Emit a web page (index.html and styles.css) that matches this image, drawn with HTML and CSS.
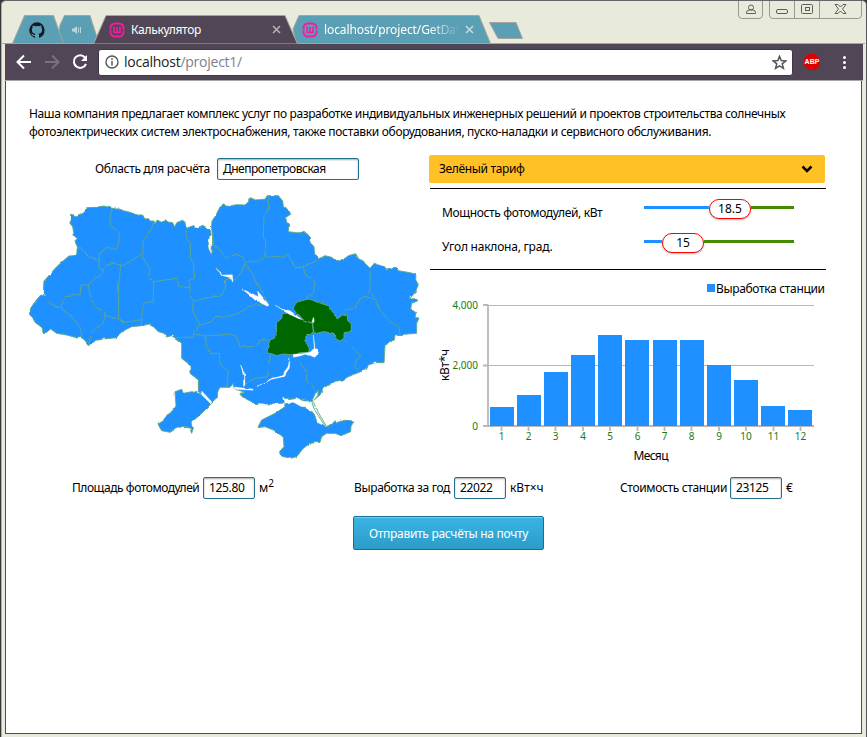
FILE: index.html
```html
<!DOCTYPE html>
<html lang="ru">
<head>
<meta charset="utf-8">
<title>Калькулятор</title>
<link rel="stylesheet" href="styles.css">
</head>
<body>
<div class="window">
  <header class="tabstrip">
    <svg class="tabshapes" width="867" height="44" viewBox="0 0 867 44" stroke="#a6a69e">
      <path d="M2 43.5H865" fill="none"/>
      <path d="M56.500 43.500L60 25L64.500 15.500H90L99 43.500Z" fill="#5b9fb5"/>
      <path d="M12.500 43.500L24.500 15.500H53.500L63.500 43.500Z" fill="#5b9fb5"/>
      <path d="M296 43.500L293 29L299 15.500H479L490.500 43.500Z" fill="#5b9fb5"/>
      <path d="M93.500 44L106 15.500H285L297.500 44Z" fill="#514655"/>
      <path d="M489.500 22.500H516L522.500 38.500H498Z" fill="#5b9fb5"/>
    </svg>
    <div class="tab github">
      <svg width="16" height="16" viewBox="0 0 16 16"><path fill="#151b20" d="M8 .3a8 8 0 0 0-2.500 15.500c.4.1.5-.2.5-.4v-1.400c-2.200.5-2.700-1-2.700-1-.4-.9-.9-1.200-.9-1.200-.7-.5.100-.5.100-.5.8.1 1.200.8 1.200.8.7 1.200 1.900.9 2.300.7.1-.5.300-.9.500-1.100-1.800-.2-3.600-.9-3.600-4 0-.9.300-1.600.8-2.100-.1-.2-.4-1 .1-2.100 0 0 .7-.2 2.200.8a7.600 7.600 0 0 1 4 0c1.500-1 2.200-.8 2.200-.8.4 1.100.2 1.900.1 2.100.5.600.8 1.300.8 2.100 0 3.100-1.900 3.700-3.600 3.900.3.300.5.800.5 1.500v2.200c0 .2.100.5.500.4A8 8 0 0 0 8 .3z"/></svg>
    </div>
    <div class="tab sound">
      <svg width="10" height="10" viewBox="0 0 10 10"><path d="M0 3.500H2L5 1V9L2 6.500H0Z" fill="#b9d6dd"/><path d="M6.500 2.500V7.500M8.500 2V8" stroke="#b9d6dd"/></svg>
    </div>
    <div class="tab active">
      <svg width="16" height="16" viewBox="0 0 16 16" fill="none" stroke="#f71ba2"><rect x="1.500" y="1.500" width="13" height="13" rx="4.500" stroke-width="2"/><path d="M5 4.500V10.500H11V4.500M8 5V10" stroke-width="1.600"/><path d="M0 8H3M13 8H16" stroke="#514655"/></svg>
      <span class="tabtitle">Калькулятор</span>
      <svg class="close" width="9" height="9" viewBox="0 0 9 9"><path d="M1 1L8 8M8 1L1 8" stroke="#b9b3bb" stroke-width="1.500"/></svg>
    </div>
    <div class="tab second">
      <svg width="16" height="16" viewBox="0 0 16 16" fill="none" stroke="#f71ba2"><rect x="1.500" y="1.500" width="13" height="13" rx="4.500" stroke-width="2"/><path d="M5 4.500V10.500H11V4.500M8 5V10" stroke-width="1.600"/><path d="M0 8H3M13 8H16" stroke="#5b9fb5"/></svg>
      <span class="tabtitle faded">localhost/project/GetDat</span>
      <svg class="close" width="9" height="9" viewBox="0 0 9 9"><path d="M1 1L8 8M8 1L1 8" stroke="#c2dce2" stroke-width="1.500"/></svg>
    </div>
    <svg class="controls" width="125" height="18" viewBox="0 0 125 18" fill="none" stroke="#99998f">
      <path d="M.5 0V14Q.5 17.500 4 17.500H21Q24.500 17.500 24.500 14V0M31.500 0V14Q31.500 17.500 35 17.500H120Q123.500 17.500 123.500 14V0M56.500 0V17M81.500 0V17"/>
      <g stroke="#5e5e5c"><circle cx="13" cy="6.500" r="2.500"/><path d="M8.500 12.500V11.500Q8.500 9.500 11 9H15Q17.500 9.500 17.500 11.500V12.500Z"/><rect x="38.500" y="8.500" width="11" height="4" rx="1.500"/><rect x="63.500" y="3.500" width="11" height="9" rx="1"/><rect x="67.500" y="6.500" width="4" height="3"/><path d="M97 3.500H100L102.500 6L105 3.500H108L104.500 8L108 12.500H105L102.500 10L100 12.500H97L100.500 8Z"/></g>
    </svg>
  </header>
  <nav class="toolbar">
    <svg class="arrow" width="16" height="16" viewBox="0 0 16 16"><path d="M15 8H2M8 1.500L1.500 8L8 14.500" fill="none" stroke="#fff" stroke-width="2"/></svg>
    <svg class="arrow" width="16" height="16" viewBox="0 0 16 16"><path d="M1 8H14M8 1.500L14.500 8L8 14.500" fill="none" stroke="#7b717e" stroke-width="2"/></svg>
    <svg class="arrow" width="16" height="16" viewBox="0 0 16 16"><path d="M13 3.500A6.300 6.300 0 1 0 14 10" fill="none" stroke="#fff" stroke-width="2"/><path d="M15 1V7H9Z" fill="#fff"/></svg>
    <div class="address">
      <svg width="14" height="14" viewBox="0 0 14 14"><circle cx="7" cy="7" r="6" fill="none" stroke="#555" stroke-width="1.400"/><path d="M7 6V10.500M7 3.300V4.900" stroke="#555" stroke-width="1.500"/></svg>
      <span class="url">localhost<span class="path">/project1/</span></span>
      <svg class="star" width="15" height="15" viewBox="0 0 15 15"><path d="M7.500 1.300L9.200 5.600L13.800 5.900L10.200 8.800L11.400 13.300L7.500 10.800L3.600 13.300L4.800 8.800L1.200 5.900L5.800 5.600Z" fill="none" stroke="#555" stroke-width="1.500"/></svg>
    </div>
    <div class="abp">ABP</div>
    <div class="dots"><i></i><i></i><i></i></div>
  </nav>
  <main>
    <p class="intro"><span class="l1">Наша компания предлагает комплекс услуг по разработке индивидуальных инженерных решений и проектов строительства солнечных</span><br><span class="l2">фотоэлектрических систем электроснабжения, также поставки оборудования, пуско-наладки и сервисного обслуживания.</span></p>
    <div class="columns">
      <section class="mapcol">
        <div class="region"><label>Область для расчёта</label><div class="field wide">Днепропетровская</div></div>
        <svg class="map" width="393" height="267" viewBox="24 27 1179 801">
          <defs><filter id="coast" x="-2%" y="-2%" width="104%" height="104%" color-interpolation-filters="sRGB"><feTurbulence type="fractalNoise" baseFrequency=".05" numOctaves="1" seed="4"/><feDisplacementMap in="SourceGraphic" scale="9" xChannelSelector="R" yChannelSelector="G"/></filter></defs>
          <g filter="url(#coast)" stroke="#5faa85" stroke-width="2.800" stroke-linejoin="round">
            <path fill="#1e90ff" d="M152 88L170 92L188 84L200 68L225 67L252 63L277 70L290 68L310 77L330 82L350 90L368 90L375 102L386 101L390 108L402 108L404 117L412 105L425 112L436 104L444 111L458 113L464 126L470 113L488 106L495 112L498 130L520 122L533 128L548 121L560 128L572 140L574 150L568 153L565 175L571 206L576 204L577 180L578 150L574 130L576 108L588 90L600 66L610 60L622 64L650 59L675 60L686 50L687 38L710 45L735 42L742 32L775 32L788 48L790 65L805 72L812 88L796 98L806 120L805 140L830 143L858 143L872 158L870 172L882 185L884 210L897 221L915 212L935 217L950 230L975 220L985 212L1007 206L1015 220L1035 235L1050 250L1063 235L1090 245L1100 255L1125 250L1135 257L1170 263L1188 268L1187 285L1195 298L1187 320L1168 343L1190 340L1192 348L1175 355L1172 372L1188 383L1185 397L1197 399L1190 415L1190 445L1125 450L1123 465L1095 481L1092 533L1065 533L1045 540L1040 553L1010 565L985 575L968 585L940 590L910 610L900 630L882 645L893 632L896 614L886 625L878 643L867 650L850 642L835 648L810 640L795 643L788 655L760 655L745 662L705 655L680 643L662 628L660 625L675 622L648 613L640 605L640 595L630 607L600 607L593 620L592 640L573 657L562 645L548 628L535 620L535 585L510 565L510 540L485 520L485 475L470 462L455 452L440 456L432 445L415 440L400 425L385 418L365 422L335 425L315 435L300 445L290 458L250 462L225 467L205 482L182 455L165 457L140 450L110 445L92 432L80 442L70 443L66 428L45 412L38 398L28 388L32 370L45 350L62 330L78 333L70 322L72 288L110 245L150 210L170 208L172 185L165 170L172 163L162 150L158 125L150 115Z"/>
            <path fill="#1e90ff" d="M573 657L545 685L525 703L513 710L518 735L515 745L508 725L485 725L465 733L450 742L425 737L414 718L430 707L438 690L456 679L468 663L465 620L485 613L490 625L515 620L530 623L550 630L565 645Z"/>
            <path fill="#1e90ff" d="M713 728L725 705L765 685L795 665L793 642L805 650L822 640L840 650L855 642L865 655L855 665L880 683L892 710L918 725L936 718L945 707L950 715L962 705L1002 708L993 724L992 740L963 752L945 745L920 745L905 755L900 772L870 775L850 790L830 815L812 820L790 815L778 800L792 785L790 757L760 735L735 725Z"/>
            <g fill="none">
              <path d="M277 70L270 95L270 122L286 130L298 150L296 175L286 193L260 191L238 205L237 250L248 255M174 188L195 200L205 215L237 223M402 108L388 145L370 165L368 205L330 230L310 242L280 235L255 242L245 270L225 280L205 300L183 300L180 330L135 335L121 370L82 350M368 205L375 230L390 250L385 272L400 290L470 280L478 306L510 307L510 285L524 280L520 235L510 222L512 180L500 160L498 130M302 240L296 300L296 400L315 412L365 404L370 355L400 348L400 290M205 300L212 345L235 372L255 382L255 390L315 412M255 390L250 415L215 440L205 482M121 370L155 395L182 430L185 455M365 404L364 420M510 307L512 335L524 350L550 340L600 333L615 310L617 285L635 275M524 350L515 370L525 390L540 420L522 440L520 456L470 458M540 420L575 410L585 395L630 393L665 380L680 370L700 360L725 360L750 350M525 445L560 453L630 447L650 455L660 485L710 485L720 465L745 465M745 35L745 65L750 65L732 90L730 160L737 165L735 213L718 228L675 232L668 215L645 208L620 220L595 190L582 183L578 150M735 213L790 215L806 210L825 248L850 245L885 230L895 222M850 245L855 270L885 290L880 325L860 335L865 345M675 235L700 270L720 310L745 355M675 235L665 260L645 285L610 270L588 250M1050 250L1050 320L1065 340L1070 345L1080 375L1110 410L1136 425L1140 445M1070 345L1035 334L1015 345L1005 370L975 375M975 465L995 485L1022 510L1003 545L1015 553M556 455L560 485L570 505L598 505L600 535L625 560L620 607M750 510L745 540L745 575L705 580L680 595L668 598M660 540L672 565L672 598M840 532L860 560L860 590L885 610L888 625M880 450L883 500L893 510"/>
            </g>
            <path fill="#060" d="M820 370L835 350L865 342L885 349L902 355L928 363L930 373L942 385L952 402L967 390L982 393L983 407L993 415L995 440L972 443L972 460L960 468L945 460L942 445L910 440L890 445L882 443L877 415L850 405Z"/>
            <path fill="#060" d="M787 387L815 390L850 405L877 415L880 440L870 449L858 448L857 470L868 490L866 502L840 503L825 510L790 507L770 512L755 506L742 504L742 490L750 465L763 460L770 440L768 415L785 400Z"/>
            <g fill="#fff" stroke="#fff" stroke-width="1">
              <path d="M667 312L700 328L715 335L713 318L735 345L747 360L742 364L705 345Z"/><path d="M765 360L785 372L810 377L845 403L836 401L800 383Z"/><path d="M820 508L845 506L870 502L883 490L880 450L885 490L896 503L885 517L855 508L840 513L820 517Z"/><path d="M810 518L808 550L790 575L755 583L710 605L755 580L785 572L804 545Z"/><path d="M642 606L698 612L700 616L648 613ZM662 540L674 565L675 600L671 605L670 567ZM788 640L815 645L835 640L845 648L867 650L867 665L845 665L820 652L793 655ZM715 655L745 659L748 663L720 661ZM867 645L875 660L920 725L895 714L885 690ZM545 618L575 650L573 657L545 629Z"/>
              <path d="M588 250L610 270L637 269L639 290L633 278L608 272ZM880 397L883 405L880 415L876 410Z"/>
            </g>
            <path fill="none" d="M873 645L883 673L916 725M878 643L887 669L920 725"/>
          </g>
        </svg>
      </section>
      <section class="side">
        <div class="tariff"><span>Зелёный тариф</span><svg width="12" height="8" viewBox="0 0 12 8"><path d="M1.500 1.500L6 6L10.500 1.500" fill="none" stroke="#000" stroke-width="2.500"/></svg></div>
        <div class="params">
          <div class="param"><span class="p1">Мощность фотомодулей, кВт</span><div class="slider first"><div class="fill"></div><div class="thumb">18.5</div><div class="rest"></div></div></div>
          <div class="param"><span class="p2">Угол наклона, град.</span><div class="slider secondary"><div class="fill"></div><div class="thumb">15</div><div class="rest"></div></div></div>
        </div>
        <svg class="chart" width="400" height="195" viewBox="429 271 400 195">
          <rect x="707" y="284" width="8" height="8" fill="#1e90ff"/>
          <text x="716" y="293" textLength="109">Выработка станции</text>
          <path d="M489 305.500H814M489 365.500H814" stroke="#b8b8b8"/>
          <path d="M488 304.500V427M483 305H488M483 365.500H488M483 426H814" stroke="#b8b8b8" stroke-width="1.800" fill="none"/>
          <path d="M501.500 426V431M528.500 426V431M555.500 426V431M583 426V431M610 426V431M637.500 426V431M664.500 426V431M691.500 426V431M719 426V431M746 426V431M773.500 426V431M800.500 426V431" stroke="#b8b8b8" stroke-width="1.800"/>
          <path fill="#1e90ff" d="M490 407h24v19h-24zM517 395h24v31h-24zM544 372h24v54h-24zM571 355h24v71h-24zM598 335h24v91h-24zM625 340h24v86h-24zM653 340h24v86h-24zM680 340h24v86h-24zM707 365h24v61h-24zM734 380h24v46h-24zM761 406h24v20h-24zM788 410h24v16h-24z"/>
          <g class="ticks"><g text-anchor="end"><text x="478" y="308.500">4,000</text><text x="478" y="369">2,000</text><text x="478" y="429.500">0</text></g>
          <g text-anchor="middle"><text x="501.500" y="440">1</text><text x="528.500" y="440">2</text><text x="555.500" y="440">3</text><text x="583" y="440">4</text><text x="610" y="440">5</text><text x="637.500" y="440">6</text><text x="664.500" y="440">7</text><text x="691.500" y="440">8</text><text x="719" y="440">9</text><text x="746" y="440">10</text><text x="773.500" y="440">11</text><text x="800.500" y="440">12</text></g></g>
          <text x="633.500" y="460" textLength="35">Месяц</text>
          <text transform="translate(449 381) rotate(-90)" textLength="32">кВт*ч</text>
        </svg>
      </section>
    </div>
    <div class="results">
      <div class="result area"><label>Площадь фотомодулей</label><div class="field">125.80</div><span>м<sup>2</sup></span></div>
      <div class="result year"><label>Выработка за год</label><div class="field">22022</div><span>кВт×ч</span></div>
      <div class="result cost"><label>Стоимость станции</label><div class="field">23125</div><span>€</span></div>
    </div>
    <button class="send">Отправить расчёты на почту</button>
  </main>
</div>
</body>
</html>
```
FILE: styles.css
```css
* { box-sizing: border-box; }
body { margin: 0; background: #35383b; font: 12px/18px "Noto Sans", "Open Sans", sans-serif; color: #000; }
svg { display: block; flex: none; }
.window { height: 737px; margin-left: 1px; padding: 0 4px 3px 3px; background: #e8eadc; border-top: 1px solid #66666a; border-left: 1px solid #b4ae9f; border-right: 1px solid #55555a; border-radius: 5px 5px 0 0; display: flex; flex-direction: column; }
.tabstrip { height: 43px; flex: none; margin: 0 -4px 0 -3px; display: flex; align-items: flex-start; }
.tabshapes { position: absolute; left: 0; top: 0; }
.tab { position: relative; height: 29px; margin-top: 14px; display: flex; align-items: center; color: #fff; white-space: nowrap; }
.github { width: 43px; margin-left: 12px; padding-left: 15px; }
.sound { width: 52px; padding-left: 15px; }
.active { width: 193px; }
.second { width: 178px; }
.tabtitle { margin-left: 6px; letter-spacing: -.3px; }
.second .tabtitle { letter-spacing: -.1px; }
.faded { width: 134px; mask-image: linear-gradient(90deg, #000 78%, transparent 102%); }
.active .close { margin-left: auto; margin-right: 21px; }
.second .close { margin-left: 7px; }
.controls { margin-left: auto; margin-right: 3px; }
.toolbar { height: 37px; flex: none; margin: 0 -1px 0 0; padding: 0 11px; background: #514655; border-bottom: 1px solid #aaa5ac; display: flex; align-items: center; }
.arrow { margin-right: 12px; }
.address { width: 695px; height: 27px; margin-left: -2px; padding: 0 5px 0 6px; background: #fff; border: 1px solid #40364a; border-radius: 3px; display: flex; align-items: center; }
.url { margin-left: 5px; font: 14px/20px "Open Sans"; letter-spacing: -.25px; color: #222; }
.path { color: #80808a; }
.star { margin-left: auto; }
.abp { width: 16px; height: 16px; margin-left: 11px; background: #d00; clip-path: polygon(30% 0, 70% 0, 100% 30%, 100% 70%, 70% 100%, 30% 100%, 0 70%, 0 30%); color: #fff; font: bold 7px/16px "Liberation Sans"; text-align: center; }
.dots { margin-left: 23px; display: grid; gap: 2px; }
.dots i { width: 3px; height: 3px; border-radius: 50%; background: #fff; }
main { flex: 1; min-height: 0; padding: 24px 23px 0; background: #fff; border: 1px solid #514b55; border-top: 0; letter-spacing: -.35px; }
.intro { margin: 0; height: 50px; white-space: nowrap; }
.l1 { letter-spacing: -.365px; }
.l2 { letter-spacing: -.315px; }
.columns { display: flex; }
.mapcol { width: 400px; flex: none; }
.region { display: flex; align-items: center; gap: 6px; margin-left: 66px; height: 28px; }
.region label { width: 116px; white-space: nowrap; }
.field { width: 52px; height: 22px; padding: 1px 5px; border: 1px solid #23708f; border-radius: 2px; box-shadow: inset 0 1px 2px #aaa; background: #fff; flex: none; }
.wide { width: 142px; letter-spacing: -.5px; }
.map { margin: 11px 0 0 -1px; }
.side { width: 397px; flex: none; }
.tariff { width: 396px; height: 28px; padding: 0 12px 0 10px; display: flex; align-items: center; justify-content: space-between; background: #ffc125; border-radius: 2px; }
.params { margin: 5px 0 0 1px; height: 82px; padding-top: 7px; border: solid #000; border-width: 1px 0; }
.param { display: flex; align-items: center; height: 34px; padding-left: 12px; }
.param > span { width: 202px; }
.p2 { letter-spacing: -.22px; }
.slider { display: flex; align-items: center; width: 150px; margin-top: -8px; }
.fill, .rest { height: 3px; margin-bottom: 3px; background: #1e90ff; }
.rest { flex: 1; background: #458b00; }
.first .fill { width: 65px; }
.secondary .fill { width: 18px; }
.thumb { width: 42px; height: 20px; border: 1px solid red; border-radius: 10px; background: #fff; text-align: center; box-shadow: 0 1px 2px #bbb; letter-spacing: 0; }
.chart { margin-top: 1px; font-size: 12px; letter-spacing: 0; }
.ticks { font-size: 10px; fill: #187a18; }
.results { display: flex; margin-top: 11px; height: 22px; }
.result { display: flex; align-items: center; gap: 4px; white-space: nowrap; }
.result > span { letter-spacing: 0; }
.area { width: 282px; margin-left: 43px; }
.area label { width: 127px; letter-spacing: -.45px; }
.year { width: 266px; }
.year label { width: 96px; }
.cost label { width: 106px; }
sup { font-size: 10px; line-height: 0; }
.send { display: block; width: 191px; height: 34px; margin: 17px 0 0 324px; padding: 0; border: 1px solid #1c6f91; border-radius: 2px; background: linear-gradient(#3ab4e4, #2c9cc8); box-shadow: inset 0 1px #79cdeb; font: 12px "Noto Sans"; letter-spacing: -.3px; color: #fff; }
```
